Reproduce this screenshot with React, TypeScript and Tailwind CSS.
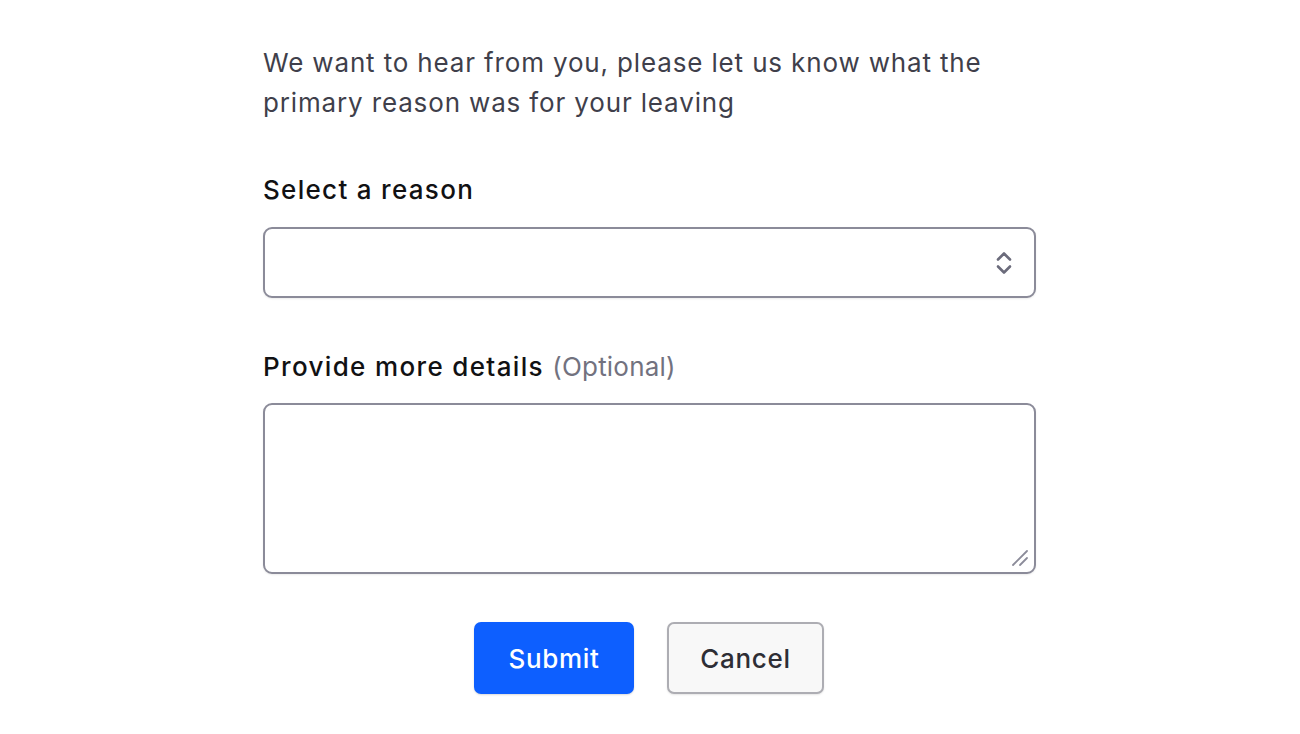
import React from "react";

export default function App() {
  return (
    <div className="min-h-[734px] w-full bg-white" style={{ fontFamily: "Inter, 'Noto Sans', sans-serif" }}>
      <div className="ml-[263px] w-[773px] pt-[43px]">
        <p className="text-[26px] leading-[40px] tracking-[0.85px] text-[#3f3f4b]">
          We want to hear from you, please let us know what the primary reason was for your leaving
        </p>

        <div className="mt-[49px] text-[26px] leading-[36px] font-medium tracking-[1.3px] text-[#111113]">Select a reason</div>
        <div className="mt-[19px] flex h-[71px] items-center justify-end rounded-[9px] border-2 border-[#8b8b99] bg-white pr-[19px] shadow-[0_1px_2px_rgba(0,0,0,0.08)]">
          <svg width="22" height="30" viewBox="0 0 22 30" fill="none" stroke="#6b6b7b" strokeWidth="2.6" strokeLinecap="round" strokeLinejoin="round">
            <path d="M5 11.5 L11 5.5 L17 11.5" />
            <path d="M5 18.5 L11 24.5 L17 18.5" />
          </svg>
        </div>

        <div className="mt-[51px] text-[26px] leading-[36px] font-medium tracking-[1.35px] text-[#111113]">
          Provide more details <span className="font-normal tracking-[0.2px] text-[#72727f]">(Optional)</span>
        </div>
        <div className="relative mt-[18px]">
          <textarea
            className="block h-[171px] w-full resize-none rounded-[9px] border-2 border-[#8b8b99] bg-white shadow-[0_1px_2px_rgba(0,0,0,0.08)] outline-none"
          />
          <svg className="pointer-events-none absolute bottom-[6px] right-[6px]" width="20" height="20" viewBox="0 0 20 20" fill="none" stroke="#8b8b99" strokeWidth="1.8" strokeLinecap="round">
            <path d="M3 17 L17 3" />
            <path d="M10 17 L17 10" />
          </svg>
        </div>

        <div className="mt-[48px] flex justify-center gap-[33px] pr-[1px]">
          <button className="h-[72px] w-[160px] rounded-[7px] bg-[#0d5fff] text-[26px] font-medium tracking-[0.7px] text-white shadow-[0_1px_2px_rgba(0,0,0,0.15)]">
            Submit
          </button>
          <button className="h-[72px] w-[157px] rounded-[7px] border-2 border-[#adadb3] bg-[#f8f8f8] text-[26px] font-medium tracking-[0.7px] text-[#2e2e35] shadow-[0_1px_2px_rgba(0,0,0,0.1)]">
            Cancel
          </button>
        </div>
      </div>
    </div>
  );
}
